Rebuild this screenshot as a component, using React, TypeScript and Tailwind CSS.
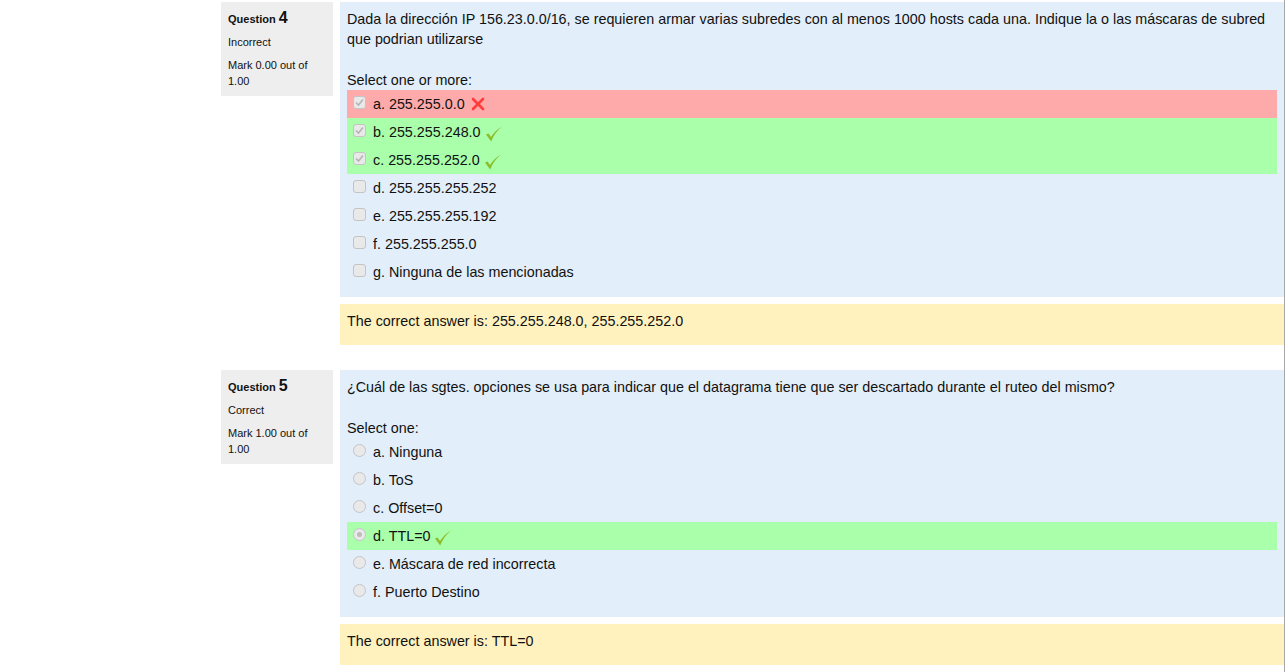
import React from "react";

type Opt = { label: string; state?: "right" | "wrong"; checked?: boolean };

const q4: Opt[] = [
  { label: "a. 255.255.0.0", state: "wrong", checked: true },
  { label: "b. 255.255.248.0", state: "right", checked: true },
  { label: "c. 255.255.252.0", state: "right", checked: true },
  { label: "d. 255.255.255.252" },
  { label: "e. 255.255.255.192" },
  { label: "f. 255.255.255.0" },
  { label: "g. Ninguna de las mencionadas" },
];

const q5: Opt[] = [
  { label: "a. Ninguna" },
  { label: "b. ToS" },
  { label: "c. Offset=0" },
  { label: "d. TTL=0", state: "right", checked: true },
  { label: "e. Máscara de red incorrecta" },
  { label: "f. Puerto Destino" },
];

function Tick() {
  return (
    <svg width="18" height="18" viewBox="0 0 18 18" className="ml-[4px] mt-[3px]">
      <path d="M1 9.5 L6.2 16.5 C8.5 10.5 12 5.5 17 1.5 C11.5 4.5 8.5 8.5 6 12 L3.5 8.5 Z" fill="#8cbd2a" />
    </svg>
  );
}

function Cross() {
  return (
    <svg width="14" height="14" viewBox="0 0 14 14" className="ml-[6px]">
      <path d="M2 2 L12 12 M12 2 L2 12" stroke="#ff3b3b" strokeWidth="2.6" strokeLinecap="round" />
    </svg>
  );
}

function Box({ radio, checked }: { radio?: boolean; checked?: boolean }) {
  if (radio) {
    return (
      <span className="w-[13px] h-[13px] rounded-full border border-[#c4c4c4] bg-[#e9e9e9] flex items-center justify-center">
        {checked && <span className="w-[5px] h-[5px] rounded-full bg-[#bcbcbc]" />}
      </span>
    );
  }
  return (
    <span className="w-[13px] h-[13px] rounded-[3px] border border-[#c4c4c4] bg-[#e9e9e9] flex items-center justify-center">
      {checked && (
        <svg width="9" height="9" viewBox="0 0 9 9">
          <path d="M1 4.5 L3.5 7 L8 1.5" stroke="#b5b5b5" strokeWidth="1.6" fill="none" />
        </svg>
      )}
    </span>
  );
}

function Question({
  n,
  status,
  mark,
  text,
  prompt,
  opts,
  radio,
  answer,
}: {
  n: number;
  status: string;
  mark: string;
  text: string;
  prompt: string;
  opts: Opt[];
  radio?: boolean;
  answer: string;
}) {
  return (
    <div className="flex gap-[7px]">
      <div className="w-[112px] h-[94px] shrink-0 bg-[#eeeeee] px-[7px] pt-[8px] text-[11px] leading-[16px]">
        <div className="font-bold">
          Question <span className="text-[16px]">{n}</span>
        </div>
        <div className="mt-[7px]">{status}</div>
        <div className="mt-[7px]">{mark}</div>
      </div>
      <div className="flex-1 text-[14.33px] leading-[20px]">
        <div className="bg-[#e2eef9] px-[7px] pt-[7px] pb-[11px]">
          <div>{text}</div>
          <div className="mt-[21px]">{prompt}</div>
          <div>
            {opts.map((o) => (
              <div
                key={o.label}
                className={
                  "h-[28px] flex items-center pl-[6px] " +
                  (o.state === "wrong" ? "bg-[#ffaaaa]" : o.state === "right" ? "bg-[#aaffaa]" : "")
                }
              >
                <span className="-mt-[3px]">
                  <Box radio={radio} checked={o.checked} />
                </span>
                <span className="ml-[7px]">{o.label}</span>
                {o.state === "wrong" && <Cross />}
                {o.state === "right" && <Tick />}
              </div>
            ))}
          </div>
        </div>
        <div className="mt-[7px] bg-[#fff2bf] px-[7px] pt-[7px] pb-[14px]">
          The correct answer is: {answer}
        </div>
      </div>
    </div>
  );
}

export default function App() {
  return (
    <div
      className="min-h-[672px] w-[1285px] bg-white text-[#111] border-r border-[#a8a8a8] pl-[221px] pt-[2px]"
      style={{ fontFamily: '"Liberation Sans", Arial, sans-serif' }}
    >
      <Question
        n={4}
        status="Incorrect"
        mark="Mark 0.00 out of 1.00"
        text="Dada la dirección IP 156.23.0.0/16, se requieren armar varias subredes con al menos 1000 hosts cada una. Indique la o las máscaras de subred que podrian utilizarse"
        prompt="Select one or more:"
        opts={q4}
        answer="255.255.248.0, 255.255.252.0"
      />
      <div className="h-[25px]" />
      <Question
        n={5}
        status="Correct"
        mark="Mark 1.00 out of 1.00"
        text="¿Cuál de las sgtes. opciones se usa para indicar que el datagrama tiene que ser descartado durante el ruteo del mismo?"
        prompt="Select one:"
        opts={q5}
        radio
        answer="TTL=0"
      />
    </div>
  );
}
